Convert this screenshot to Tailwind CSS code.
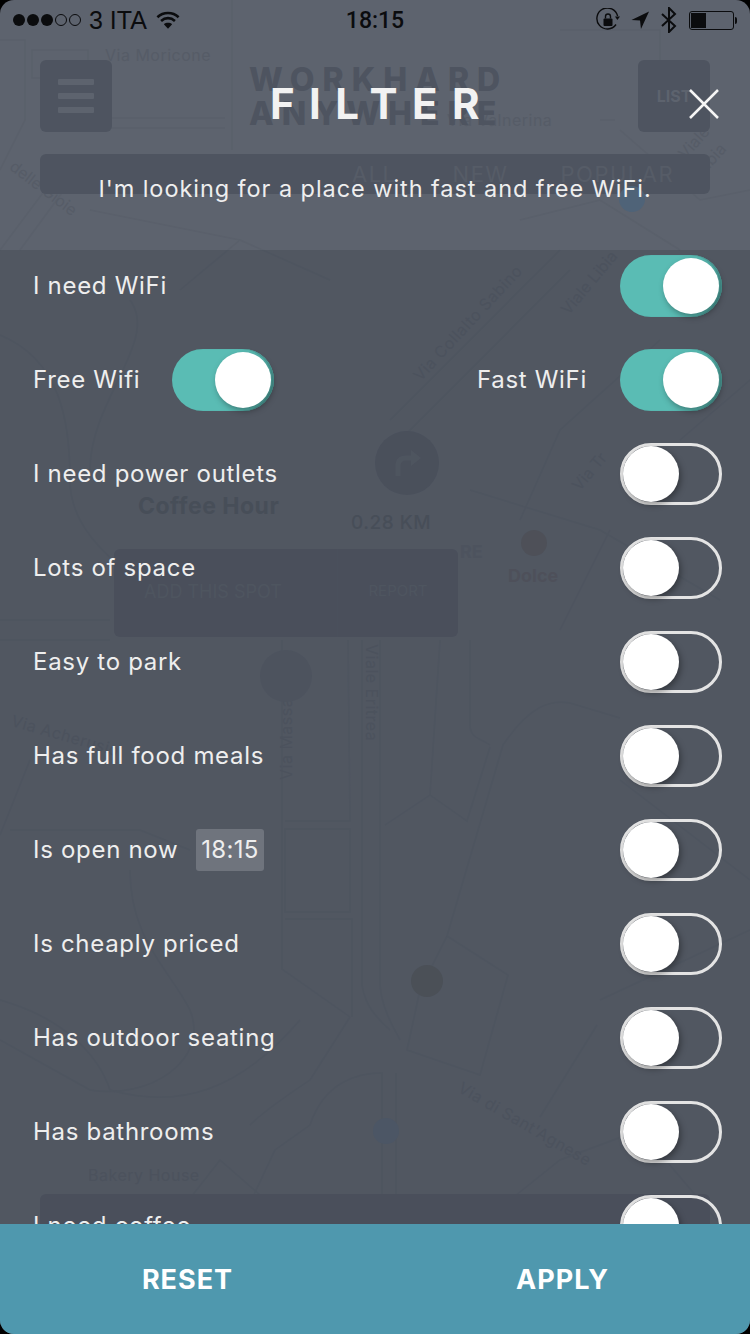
<!DOCTYPE html>
<html lang="en">
<head>
    <meta charset="UTF-8">
    <meta name="viewport" content="width=device-width, initial-scale=1.0">
    <title>Filter</title>
    <script src="https://cdn.jsdelivr.net/npm/@tailwindcss/browser@4"></script>
</head>
<body class="bg-black">
    <div class="relative w-[750px] h-[1334px] overflow-hidden rounded-[14px] bg-[#5d636e] font-['Inter',sans-serif]">

        <!-- Map behind the overlay -->
        <div class="absolute inset-0">
            <svg class="absolute inset-0" width="750" height="1334" fill="none" stroke="#5a606b" stroke-width="1.5">
                <path d="M0 40 L25 40 L25 120 L0 170"/>
                <path d="M32 50 H88 V78 H32 Z"/>
                <path d="M232 0 V150"/>
                <path d="M110 118 H225 M110 128 H225"/>
                <path d="M0 250 L60 170 M20 250 L75 175"/>
                <path d="M90 210 L240 240 M240 240 L180 290 M240 240 L330 280"/>
                <path d="M560 30 H660 V110 L640 125 M615 120 H600"/>
                <path d="M620 130 L700 200 L750 190 M520 220 L600 200 L680 250"/>
                <path d="M0 335 C60 360 70 420 70 480 C70 540 130 570 170 610"/>
                <path d="M130 300 C160 340 90 400 90 470"/>
                <path d="M390 420 L560 250 M400 440 L570 270 M660 340 L560 430 L520 520"/>
                <path d="M470 490 L600 530 L720 600 M610 530 L560 630 M680 440 L750 380"/>
                <path d="M0 620 H110 M0 640 H110"/>
                <path d="M0 835 L30 760 M10 830 H140 L190 850"/>
                <path d="M130 870 C130 940 170 970 190 1010 C210 1060 150 1100 90 1090 L0 1040"/>
                <path d="M282 640 V969 L350 1017 M348 640 L350 821 H285 M285 829 H350 V912 H285 Z M285 919 H352 V1017"/>
                <path d="M362 640 V985 C366 1010 380 1020 390 1030 M380 640 V985 C382 1010 395 1030 400 1040"/>
                <path d="M440 640 L430 795 L385 825 M470 640 V725 C470 738 480 738 490 745"/>
                <path d="M430 795 L467 821 L490 747 M503 745 L447 936 L420 990"/>
                <path d="M503 745 C530 705 550 700 570 703 L620 718"/>
                <path d="M447 936 L508 975 L480 1075 L407 1050 L420 990"/>
                <path d="M597 1025 L540 1117"/>
                <path d="M350 1017 L310 1080 C280 1100 260 1115 250 1125 M310 1125 C325 1080 360 1073 382 1073 V1224 M396 1073 V1224"/>
                <path d="M240 1224 L275 1150 L310 1125 M170 1224 L220 1160 L260 1195"/>
                <path d="M0 1000 C70 1020 100 1060 110 1090 C180 1110 240 1090 300 1020"/>
                <path d="M480 1224 L560 1160 L640 1130 L720 1224"/>
                <path d="M600 1000 L750 930 M620 780 L750 880"/>
            </svg>

            <span class="absolute left-[105px] top-[43px] text-[16px] tracking-[0.5px] text-[#565c67]">Via Moricone</span>
            <span class="absolute left-[447px] top-[108px] text-[16px] tracking-[0.5px] text-[#565c67]">Via Valnerina</span>
            <span class="absolute left-[12px] top-[152px] text-[16px] text-[#565c67] rotate-[37deg] origin-left">delle Gioie</span>
            <span class="absolute left-[690px] top-[140px] text-[16px] text-[#565c67] -rotate-[48deg] origin-left">Viale Libia</span>
            <span class="absolute left-[564px] top-[300px] text-[16px] text-[#565c67] -rotate-[50deg] origin-left">Viale Libia</span>
            <span class="absolute left-[416px] top-[366px] text-[16px] tracking-[0.5px] text-[#565c67] -rotate-[47deg] origin-left">Via Collalto Sabino</span>
            <span class="absolute left-[575px] top-[476px] text-[16px] text-[#565c67] -rotate-[50deg] origin-left">Via Tr</span>
            <span class="absolute left-[460px] top-[538px] text-[18px] font-bold text-[#585e69]">RE</span>
            <span class="absolute left-[508px] top-[562px] text-[18px] font-bold text-[#595a63]">Dolce</span>
            <div class="absolute left-[521px] top-[530px] size-[26px] rounded-full bg-[#595a61]"></div>
            <span class="absolute left-[12px] top-[708px] text-[16px] tracking-[0.5px] text-[#565c67] rotate-[16deg] origin-left">Via Acherusio</span>
            <span class="absolute left-[372px] top-[632px] text-[16px] tracking-[0.5px] text-[#565c67] rotate-90 origin-left">Viale Eritrea</span>
            <span class="absolute left-[286px] top-[768px] text-[16px] tracking-[0.5px] text-[#565c67] -rotate-90 origin-left">Via Massaua</span>
            <span class="absolute left-[88px] top-[1163px] text-[16px] tracking-[0.5px] text-[#565c67]">Bakery House</span>
            <span class="absolute left-[460px] top-[1074px] text-[16px] tracking-[0.5px] text-[#565c67] rotate-[30deg] origin-left">Via di Sant'Agnese</span>

            <!-- top bar of the app underneath -->
            <div class="absolute left-[40px] top-[60px] flex size-[72px] flex-col items-center justify-center gap-[8px] rounded-[6px] bg-[#4e5460]">
                <span class="h-[6px] w-[36px] rounded-[1px] bg-[#5d636e]"></span>
                <span class="h-[6px] w-[36px] rounded-[1px] bg-[#5d636e]"></span>
                <span class="h-[6px] w-[36px] rounded-[1px] bg-[#5d636e]"></span>
            </div>
            <div class="absolute left-[249px] top-[63px] w-[275px] text-[32px] leading-[34px] font-extrabold tracking-[8px] text-[#4e5460]">WORKHARD<br>ANYWHERE</div>
            <div class="absolute left-[638px] top-[60px] flex size-[72px] items-center justify-center rounded-[6px] bg-[#4e5460] text-[16px] font-bold text-[#5d636e]">LIST</div>
            <div class="absolute left-[40px] top-[154px] flex h-[40px] w-[670px] items-center rounded-[6px] bg-[#4e5460] pl-[312px] text-[22px] tracking-[1.5px] text-[#565c67]">
                <span>ALL</span><span class="ml-[56px]">NEW</span><span class="ml-[52px]">POPULAR</span>
            </div>
            <div class="absolute left-[619px] top-[186px] size-[26px] rounded-full bg-[#4f6378]"></div>

            <!-- spot card -->
            <div class="absolute left-[375px] top-[431px] flex size-[64px] items-center justify-center rounded-full bg-[#535965]">
                <svg width="34" height="34" viewBox="0 0 34 34" fill="none" stroke="#5a606b" stroke-width="5"><path d="M8 30 V20 Q8 12 16 12 H24"/><path d="M21 4 L31 12 L21 20 Z" fill="#5a606b" stroke="none"/></svg>
            </div>
            <span class="absolute left-[138px] top-[489px] text-[23px] font-bold tracking-[0.5px] text-[#505661]">Coffee Hour</span>
            <span class="absolute left-[351px] top-[509px] text-[19px] font-medium tracking-[0.5px] text-[#505661]">0.28 KM</span>
            <div class="absolute left-[114px] top-[549px] flex h-[88px] w-[344px] rounded-[6px] bg-[#535865]">
                <span class="w-[223px] pt-[29px] pl-[30px] text-left text-[18px] text-[#5a606b]">ADD THIS SPOT</span>
                <span class="flex-1 border-l border-[#585e69]/40 pt-[31px] text-center text-[15px] text-[#5a606b]">REPORT</span>
            </div>

            <!-- pins and the bar at the bottom -->
            <div class="absolute left-[260px] top-[650px] size-[52px] rounded-full bg-[#585e69]"></div>
            <div class="absolute left-[411px] top-[965px] size-[32px] rounded-full bg-[#55595f]"></div>
            <div class="absolute left-[373px] top-[1118px] size-[26px] rounded-full bg-[#566273]"></div>
            <div class="absolute left-[40px] top-[1194px] h-[60px] w-[670px] rounded-[6px] bg-[#535865]"></div>
        </div>

        <!-- Filter overlay -->
        <div class="relative flex h-full flex-col">
            <!-- Status bar -->
            <div class="flex h-[40px] items-center justify-between pr-[13px] pl-[13px] font-['Liberation_Sans',sans-serif] text-[25px] text-[#0b0c0e]">
                <div class="flex w-[270px] items-center">
                    <span class="size-[12px] rounded-full bg-[#0b0c0e]"></span>
                    <span class="ml-[2px] size-[12px] rounded-full bg-[#0b0c0e]"></span>
                    <span class="ml-[2px] size-[12px] rounded-full bg-[#0b0c0e]"></span>
                    <span class="ml-[2px] size-[12px] rounded-full border border-[#0b0c0e]"></span>
                    <span class="ml-[2px] size-[12px] rounded-full border border-[#0b0c0e]"></span>
                    <span class="ml-[8px] leading-none">3 ITA</span>
                    <svg class="ml-[9px]" width="24" height="20" viewBox="0 0 26 20" fill="none" stroke="#0b0c0e" stroke-width="2.8">
                        <path d="M1.5 7 C8 1 18 1 24.5 7"/>
                        <path d="M5.5 11 C10 7 16 7 20.5 11"/>
                        <path d="M13 19.5 L8.5 14.5 C11 12.5 15 12.5 17.5 14.5 Z" fill="#0b0c0e" stroke="none"/>
                    </svg>
                </div>
                <span class="font-['Roboto',sans-serif] text-[23px] font-medium leading-none">18:15</span>
                <div class="flex w-[270px] items-center justify-end">
                    <svg width="24" height="24" viewBox="0 0 24 24" fill="none" stroke="#0b0c0e" stroke-width="1.4">
                        <path d="M20 16.5 A10.5 10.5 0 1 1 21.6 8"/>
                        <path d="M19 8.5 L24 8.5 L21.4 12 Z" fill="#0b0c0e" stroke="none"/>
                        <rect x="7.5" y="10.5" width="9" height="7.5" rx="1" fill="#0b0c0e" stroke="none"/>
                        <path d="M9.5 10.5 V8.5 A2.5 2.5 0 0 1 14.5 8.5 V10.5"/>
                    </svg>
                    <svg class="ml-[11px]" width="19" height="19" viewBox="0 0 20 20" fill="#0b0c0e"><path d="M19 0.5 L10.5 19 L9.5 10 L0.5 9.5 Z"/></svg>
                    <svg class="ml-[11px]" width="16" height="26" viewBox="0 0 16 26" fill="none" stroke="#0b0c0e" stroke-width="2"><path d="M1 7 L14 19 L8 25 V1 L14 7 L1 19"/></svg>
                    <div class="ml-[12px] flex items-center">
                        <div class="h-[19px] w-[45px] rounded-[3px] border border-[#0b0c0e] p-[1px]"><div class="h-full w-[15px] bg-[#0b0c0e]"></div></div>
                        <div class="ml-[1px] h-[7px] w-[2px] rounded-r-[2px] bg-[#0b0c0e]"></div>
                    </div>
                </div>
            </div>

            <!-- Header -->
            <div class="relative flex h-[210px] flex-col items-center">
                <h1 class="mt-[39px] pl-[14px] text-[42px] leading-[50px] font-bold tracking-[14.4px] text-[#f2f2f2]">FILTER</h1>
                <p class="mt-[43px] text-[23.5px] leading-[34px] tracking-[0.94px] text-[#eeeeee]">I'm looking for a place with fast and free WiFi.</p>
                <svg class="absolute top-[48px] left-[688px]" width="32" height="32" viewBox="0 0 32 32" stroke="#f5f5f5" stroke-width="2.5"><path d="M2 2 L30 30 M30 2 L2 30"/></svg>
            </div>

            <!-- Filter list -->
            <div class="flex flex-1 flex-col gap-[32px] overflow-hidden bg-[#343a44]/30 pt-[5px] pr-[28px] pl-[33px] text-[24px] tracking-[0.7px] text-[#eeeeee]">
                <div class="flex h-[62px] shrink-0 items-center justify-between">
                    <span>I need WiFi</span>
                    <span class="relative block h-[62px] w-[102px] rounded-full bg-[#5abcb4] shadow-[inset_-2px_0_1px_#4a9a95]"><span class="absolute top-[3px] left-[43px] size-[56px] rounded-full bg-white shadow-[2px_3px_6px_rgba(0,0,0,0.35)]"></span></span>
                </div>
                <div class="flex h-[62px] shrink-0 items-center">
                    <span class="w-[139px]">Free Wifi</span>
                    <span class="relative block h-[62px] w-[102px] rounded-full bg-[#5abcb4] shadow-[inset_-2px_0_1px_#4a9a95]"><span class="absolute top-[3px] left-[43px] size-[56px] rounded-full bg-white shadow-[2px_3px_6px_rgba(0,0,0,0.35)]"></span></span>
                    <span class="ml-auto">Fast WiFi</span>
                    <span class="relative ml-[33px] block h-[62px] w-[102px] rounded-full bg-[#5abcb4] shadow-[inset_-2px_0_1px_#4a9a95]"><span class="absolute top-[3px] left-[43px] size-[56px] rounded-full bg-white shadow-[2px_3px_6px_rgba(0,0,0,0.35)]"></span></span>
                </div>
                <div class="flex h-[62px] shrink-0 items-center justify-between">
                    <span>I need power outlets</span>
                    <span class="relative block h-[62px] w-[102px] rounded-full border-[3px] border-[#e4e4e4]"><span class="absolute top-0 left-0 size-[56px] rounded-full bg-white shadow-[2px_3px_6px_rgba(0,0,0,0.35)]"></span></span>
                </div>
                <div class="flex h-[62px] shrink-0 items-center justify-between">
                    <span>Lots of space</span>
                    <span class="relative block h-[62px] w-[102px] rounded-full border-[3px] border-[#e4e4e4]"><span class="absolute top-0 left-0 size-[56px] rounded-full bg-white shadow-[2px_3px_6px_rgba(0,0,0,0.35)]"></span></span>
                </div>
                <div class="flex h-[62px] shrink-0 items-center justify-between">
                    <span>Easy to park</span>
                    <span class="relative block h-[62px] w-[102px] rounded-full border-[3px] border-[#e4e4e4]"><span class="absolute top-0 left-0 size-[56px] rounded-full bg-white shadow-[2px_3px_6px_rgba(0,0,0,0.35)]"></span></span>
                </div>
                <div class="flex h-[62px] shrink-0 items-center justify-between">
                    <span>Has full food meals</span>
                    <span class="relative block h-[62px] w-[102px] rounded-full border-[3px] border-[#e4e4e4]"><span class="absolute top-0 left-0 size-[56px] rounded-full bg-white shadow-[2px_3px_6px_rgba(0,0,0,0.35)]"></span></span>
                </div>
                <div class="flex h-[62px] shrink-0 items-center">
                    <span class="w-[163px]">Is open now</span>
                    <span class="flex h-[42px] w-[68px] items-center justify-center rounded-[3px] bg-[#6f747d] tracking-[0.3px]">18:15</span>
                    <span class="relative ml-auto block h-[62px] w-[102px] rounded-full border-[3px] border-[#e4e4e4]"><span class="absolute top-0 left-0 size-[56px] rounded-full bg-white shadow-[2px_3px_6px_rgba(0,0,0,0.35)]"></span></span>
                </div>
                <div class="flex h-[62px] shrink-0 items-center justify-between">
                    <span>Is cheaply priced</span>
                    <span class="relative block h-[62px] w-[102px] rounded-full border-[3px] border-[#e4e4e4]"><span class="absolute top-0 left-0 size-[56px] rounded-full bg-white shadow-[2px_3px_6px_rgba(0,0,0,0.35)]"></span></span>
                </div>
                <div class="flex h-[62px] shrink-0 items-center justify-between">
                    <span>Has outdoor seating</span>
                    <span class="relative block h-[62px] w-[102px] rounded-full border-[3px] border-[#e4e4e4]"><span class="absolute top-0 left-0 size-[56px] rounded-full bg-white shadow-[2px_3px_6px_rgba(0,0,0,0.35)]"></span></span>
                </div>
                <div class="flex h-[62px] shrink-0 items-center justify-between">
                    <span>Has bathrooms</span>
                    <span class="relative block h-[62px] w-[102px] rounded-full border-[3px] border-[#e4e4e4]"><span class="absolute top-0 left-0 size-[56px] rounded-full bg-white shadow-[2px_3px_6px_rgba(0,0,0,0.35)]"></span></span>
                </div>
                <div class="flex h-[62px] shrink-0 items-center justify-between">
                    <span>I need coffee</span>
                    <span class="relative block h-[62px] w-[102px] rounded-full border-[3px] border-[#e4e4e4]"><span class="absolute top-0 left-0 size-[56px] rounded-full bg-white shadow-[2px_3px_6px_rgba(0,0,0,0.35)]"></span></span>
                </div>
            </div>

            <!-- Bottom actions -->
            <div class="grid h-[110px] shrink-0 grid-cols-2 bg-[#4f98ae] pt-[2px] text-[27px] font-bold tracking-[1px] text-white">
                <span class="flex items-center justify-center">RESET</span>
                <span class="flex items-center justify-center">APPLY</span>
            </div>
        </div>
    </div>
</body>
</html>
